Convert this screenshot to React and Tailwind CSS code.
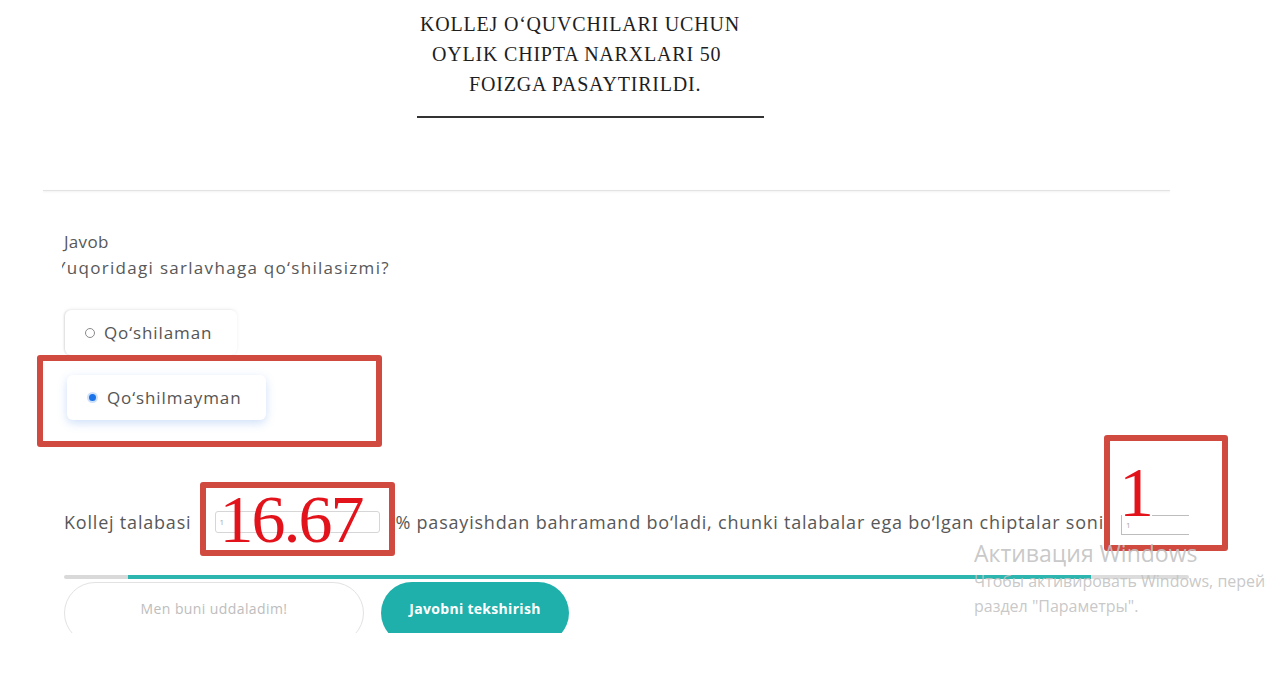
const bodyFont = { fontFamily: '"Open Sans", "Noto Sans", sans-serif' };

const Radio = ({ checked }) =>
  checked ? (
    <span className="w-[11px] h-[11px] rounded-full bg-[#1a73e8] border-[2px] border-[#cfe0fb] shrink-0" />
  ) : (
    <span className="w-[10px] h-[10px] rounded-full border border-[#8a8a8a] bg-white shrink-0" />
  );

const Option = ({ label, checked }) => (
  <div
    className={`w-fit h-[45px] flex items-center gap-[9px] pl-[20px] pr-[25px] rounded-[6px] bg-white text-[17px] tracking-[0.9px] text-[#555] ${
      checked
        ? "shadow-[0_3px_10px_rgba(80,140,230,0.28)]"
        : "shadow-[-1px_0_2px_rgba(0,0,0,0.12),0_-1px_4px_rgba(0,0,0,0.05)]"
    }`}
  >
    <Radio checked={checked} />
    {label}
  </div>
);

export default function App() {
  return (
    <div className="relative w-[1280px] h-[680px] overflow-hidden bg-white" style={bodyFont}>
      {/* Headline */}
      <div
        className="ml-[417px] w-[347px] pt-[9px] text-[20px] leading-[30px] tracking-[0.8px] text-[#1e1e1e]"
        style={{ fontFamily: '"Liberation Serif", serif' }}
      >
        <div className="pl-[3px] whitespace-nowrap">KOLLEJ O‘QUVCHILARI UCHUN</div>
        <div className="pl-[15px] whitespace-nowrap">OYLIK CHIPTA NARXLARI 50</div>
        <div className="pl-[52px] whitespace-nowrap">FOIZGA PASAYTIRILDI.</div>
        <div className="mt-[17px] h-[2px] bg-[#333]" />
      </div>

      <div className="mt-[72px] ml-[43px] w-[1127px] h-[1px] bg-[#e3e3e3] shadow-[0_1px_2px_rgba(0,0,0,0.08)]" />

      <div className="pl-[64px]">
        {/* Question */}
        <div className="mt-[38px] text-[17px] leading-[26px] text-[#585858]">
          <div className="tracking-[0.3px]">Javob</div>
          <div className="-ml-[2px] overflow-hidden">
            <div className="-ml-[6px] whitespace-nowrap tracking-[1.3px]">Yuqoridagi sarlavhaga qo‘shilasizmi?</div>
          </div>
        </div>

        <div className="mt-[29px] ml-[1px]">
          <Option label="Qo‘shilaman" />
        </div>
        <div className="relative mt-[20px] ml-[3px] w-fit">
          <Option label="Qo‘shilmayman" checked />
          <div className="absolute -left-[30px] -top-[20px] w-[345px] h-[92px] border-[6px] border-[#d04a40] rounded-[3px]" />
        </div>

        {/* Fill-in sentence */}
        <div className="mt-[89px] h-[26px] flex items-center whitespace-nowrap text-[18px] tracking-[0.8px] text-[#585858]">
          <span>Kollej talabasi</span>
          <span className="relative ml-[24px] mr-[15px] tracking-normal">
            <span className="block w-[165px] h-[22px] border border-[#d6d6d6] rounded-[3px] text-[8px] leading-[20px] pl-[3px] text-[#aaa]">
              1
            </span>
            <span className="absolute -left-[15px] -top-[29px] w-[195px] h-[74px] border-[6px] border-[#d04a40] rounded-[3px]" />
            <span
              className="absolute left-[4px] -top-[32px] text-[68px] leading-[80px] tracking-[-2px] text-[#e3131c]"
              style={{ fontFamily: '"Liberation Serif", serif' }}
            >
              16.67
            </span>
          </span>
          <span>% pasayishdan bahramand bo‘ladi, chunki talabalar ega bo‘lgan chiptalar soni</span>
          <span className="relative ml-[17px] tracking-normal">
            <span className="relative block w-[68px] h-[20px] border-b border-l border-[#bdbdbd] text-[8px] leading-[19px] pl-[4px] text-[#aaa] mt-[6px]">
              1
              <span className="absolute top-0 left-[30px] right-0 h-px bg-[#bdbdbd]" />
            </span>
            <span
              className="absolute -left-[2px] -top-[56px] text-[70px] leading-[80px] text-[#e3131c]"
              style={{ fontFamily: '"Liberation Serif", serif' }}
            >
              1
            </span>
            <span className="absolute -left-[17px] -top-[74px] w-[124px] h-[116px] border-[6px] border-[#d04a40] rounded-[3px]" />
          </span>
        </div>

        {/* Progress */}
        <div className="mt-[40px] w-[1125px] h-[4px] flex rounded-full overflow-hidden">
          <div className="w-[64px] bg-[#d9d9d9]" />
          <div className="w-[963px] bg-[#2db6b0]" />
          <div className="flex-1 bg-[#dcdcdc]" />
        </div>

        {/* Buttons */}
        <div className="mt-[3px] h-[51px] overflow-hidden flex gap-[17px]">
          <button className="w-[300px] h-[62px] rounded-full border border-[#e2e2e2] bg-white text-[14px] tracking-[0.4px] text-[#bdbdbd] pb-[9px]">
            Men buni uddaladim!
          </button>
          <button className="w-[188px] h-[62px] rounded-full bg-[#1fb0ab] text-[14px] tracking-[0.3px] font-bold text-white pb-[9px]">
            Javobni tekshirish
          </button>
        </div>
      </div>

      {/* Windows watermark */}
      <div
        className="absolute left-[974px] top-[538px] w-[291px] overflow-hidden whitespace-nowrap text-[#c2c2c2]/90"
        style={{ fontFamily: '"Open Sans", "Noto Sans", sans-serif' }}
      >
        <div className="text-[23px] leading-[30px]">Активация Windows</div>
        <div className="text-[16px] leading-[25px] mt-[1px]">Чтобы активировать Windows, перейдите в</div>
        <div className="text-[16px] leading-[25px]">раздел "Параметры".</div>
      </div>
    </div>
  );
}
